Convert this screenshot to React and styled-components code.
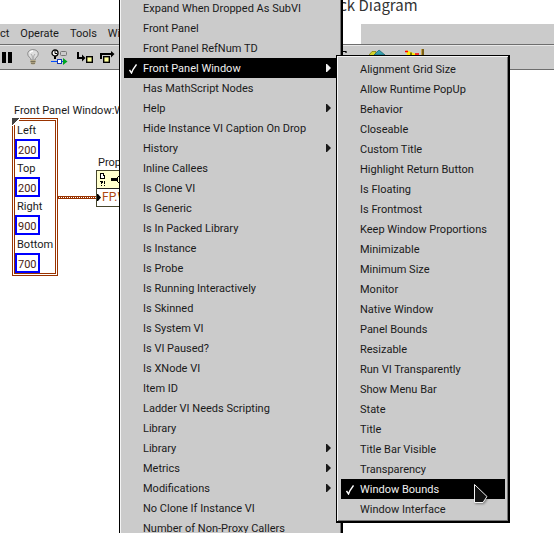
import React from "react";
import styled, { createGlobalStyle, css } from "styled-components";

const Global = createGlobalStyle`
  * { box-sizing: border-box; }
  html, body { margin: 0; background: #fff; }
  body, button, input {
    font-family: Roboto, "Noto Sans CJK SC", sans-serif;
    font-size: 11px;
    line-height: 20px;
    color: #1a1a1a;
  }
  svg { display: block; }
`;

const Screen = styled.div`
  position: relative;
  display: flex;
  flex-direction: column;
  height: 100vh;
  overflow: hidden;
  background: #fff;
`;

const TitleBar = styled.header`
  flex: none;
  height: 24px;
  padding-left: 316px;
`;

const Title = styled.h1`
  margin: -3px 0 0;
  font-family: "Noto Sans CJK SC", sans-serif;
  font-size: 15px;
  font-weight: 400;
  line-height: 16px;
  color: #333;
  white-space: nowrap;
`;

const MenuBar = styled.nav`
  flex: none;
  display: flex;
  height: 20px;
`;

const MenuBarItems = styled.div`
  display: flex;
  flex: none;
  gap: 11px;
  width: 341px;
  background: #cbcbcb;
`;

const MenuBarButton = styled.button`
  border: 0;
  padding: 0;
  background: none;
  white-space: nowrap;
`;

const MenuBarRest = styled.div`
  flex: 1;
  margin-left: 20px;
  background: #cbcbcb;
`;

const Toolbar = styled.div`
  flex: none;
  display: flex;
  align-items: center;
  height: 26px;
  border-top: 1px solid #6e6e6e;
  border-bottom: 1px solid #6e6e6e;
  box-shadow: inset 0 1px #e8e8e8;
  background: #cbcbcb;
`;

const ToolButton = styled.button`
  flex: none;
  display: flex;
  border: 0;
  padding: 0;
  margin-left: ${(p) => p.$gap}px;
  background: none;
`;

const Canvas = styled.main`
  position: relative;
  flex: 1;
`;

const Node = styled.div`
  position: absolute;
  left: ${(p) => p.$x}px;
  top: ${(p) => p.$y}px;
`;

const NodeLabel = styled.div`
  line-height: 16px;
  white-space: nowrap;
`;

const Cluster = styled.div`
  width: 46px;
  border: 3px double #993300;
  background: #fff;
`;

const Field = styled.label`
  display: block;
  line-height: 16px;
  white-space: nowrap;
`;

const FieldName = styled.span`
  display: block;
  padding: 2px 0 0 2px;
`;

const FieldValue = styled.input`
  display: block;
  width: 25px;
  height: 20px;
  border: 2px solid #0000ff;
  padding: 2px 0 0 1px;
  line-height: 14px;
  background: #fff;
  color: #4a2213;
`;

const PropertyNode = styled.div`
  width: 70px;
  border: 1px solid #45452c;
  background: #fff;
`;

const PropertyHead = styled.div`
  display: flex;
  height: 18px;
  border-bottom: 1px solid #222;
  background: #ffffcc;
`;

const PropertyRow = styled.div`
  display: flex;
  align-items: center;
  gap: 1px;
  height: 17px;
  font-size: 12px;
  line-height: 17px;
  color: #b04a12;
`;

const Menu = styled.div`
  position: absolute;
  left: ${(p) => p.$x}px;
  top: ${(p) => p.$y}px;
  width: ${(p) => p.$width}px;
  border: solid #000;
  border-width: 1px 2px 2px 1px;
  padding: 3px 3px 2px 4px;
  background: #cbcbcb;
  box-shadow: inset 1px 1px #f4f4f4, inset -1px -1px #777;
`;

const Item = styled.button`
  display: flex;
  align-items: center;
  width: 100%;
  height: 20px;
  border: 0;
  padding: 0 7px 0 5px;
  background: transparent;
  text-align: left;
  white-space: nowrap;
  ${(p) =>
    p.$active &&
    css`
      background: #000;
      color: #f0f0f0;
    `}
`;

const CheckSlot = styled.span`
  flex: none;
  display: flex;
  width: 14px;
  padding-top: 2px;
`;

const ItemText = styled.span`
  flex: 1;
  padding-top: 2px;
  line-height: 18px;
`;

const Pointer = styled.svg`
  position: absolute;
  left: 473px;
  top: 483px;
  filter: drop-shadow(1px 1px 1px #0006);
`;

const Check = () => (
  <svg width="8" height="10" viewBox="0 0 8 10" fill="none" stroke="#fff" strokeWidth="1.4">
    <path d="M.5 6L2.5 9L4 5.5L7.5 .5" />
  </svg>
);

const Arrow = () => (
  <svg width="5" height="8" viewBox="0 0 5 8" fill="currentColor">
    <path d="M0 0H1L5 4L1 8H0Z" />
  </svg>
);

const PauseIcon = () => (
  <svg width="10" height="11" shapeRendering="crispEdges">
    <path d="M0 0H4V11H0ZM6 0H10V11H6Z" fill="#000" />
  </svg>
);

const BulbIcon = () => (
  <svg width="12" height="16" viewBox="0 0 12 16">
    <path d="M4 11C4 8.5 .7 8 .7 4.8C.7 2.3 3 .6 6 .6S11.3 2.3 11.3 4.8C11.3 8 8 8.5 8 11Z" fill="#dedede" stroke="#8a8a8a" />
    <path d="M3 3.6Q4 2 6 2" fill="none" stroke="#fff" strokeWidth="1.5" />
    <path d="M4 5L5.3 7V11M8 5L6.7 7V11" fill="none" stroke="#aaa" />
    <path d="M3.5 11H8.5V14L7.2 15.5H4.8L3.5 14Z" fill="#b8ab86" />
    <path d="M3.5 12.5H8.5M4 14.3H8" stroke="#77705a" />
  </svg>
);

const ProbeIcon = () => (
  <svg width="17" height="16" viewBox="0 0 17 16">
    <circle cx="4" cy="4" r="3" fill="#fff" stroke="#000" strokeWidth="1.3" />
    <path d="M4 2V4.5H6" fill="none" stroke="#000" />
    <path d="M4 7V10" stroke="#000" strokeWidth="2" />
    <rect x="9.5" y="2.5" width="6" height="4" rx="1" fill="#ccc" stroke="#777" />
    <path d="M0 12.5H6M10 12.5H12" stroke="#004cff" />
    <rect x="6.5" y="10.5" width="4" height="4" fill="#fff" stroke="#1437b0" />
    <path d="M12 9L16.5 12.5L12 16Z" fill="#00a520" />
  </svg>
);

const StepIntoIcon = () => (
  <svg width="16" height="11" viewBox="0 0 16 11">
    <path d="M1 0V6H6" fill="none" stroke="#000" strokeWidth="2" />
    <path d="M5 2.5L8.5 6L5 9.5Z" />
    <rect x="9.7" y="4.7" width="5.6" height="5.6" fill="#ffff99" stroke="#000" strokeWidth="1.4" />
  </svg>
);

const StepOverIcon = () => (
  <svg width="15" height="12" viewBox="0 0 15 12">
    <path d="M1 8V3H11" fill="none" stroke="#000" strokeWidth="2" />
    <path d="M11 0L14.5 3L11 6.5Z" />
    <rect x="3.7" y="5.7" width="5.6" height="5.6" fill="#ffff99" stroke="#000" strokeWidth="1.4" />
  </svg>
);

const StepOutIcon = () => (
  <svg width="8" height="12" viewBox="0 0 8 12">
    <path d="M0 .5H4V2" fill="none" stroke="#000" strokeWidth="1.2" />
  </svg>
);

const CleanUpIcon = () => (
  <svg width="17" height="16" viewBox="0 0 17 16">
    <path d="M0 6L3 2.5H7L6 7H0Z" fill="#d4d42a" stroke="#777700" strokeWidth=".7" />
    <path d="M5 6L10 1L16 6Z" fill="#35a0b0" stroke="#17606a" strokeWidth=".7" />
  </svg>
);

const WarnIcon = () => (
  <svg width="20" height="16" viewBox="0 0 20 16">
    <path d="M1 1L13 6H2Z" fill="#ffee00" />
    <path d="M0 2.5H3M10 5H14" stroke="#f00" strokeWidth="1.5" />
    <path d="M6 3.5V6" stroke="#000" />
    <path d="M16 0H19V6H16Z" fill="#7a6018" />
    <path d="M16.5 0V6" stroke="#c9a54a" />
  </svg>
);

const Wire = () => (
  <svg width="38" height="3" viewBox="0 0 38 3" shapeRendering="crispEdges">
    <path d="M0 .5H38M0 2.5H38" stroke="#993300" />
    <path d="M0 1.5H38" stroke="#993300" strokeDasharray="1 1" />
  </svg>
);

const Corner = () => (
  <svg width="8" height="8" viewBox="0 0 8 8" shapeRendering="crispEdges">
    <path d="M0 0H8V1H7V3H5V5H3V7H1V8H0Z" fill="#fff" />
    <path d="M0 0H7V1H6V2H5V3H4V4H3V5H2V6H1V7H0Z" fill="#444" />
  </svg>
);

const PropertyIcon = () => (
  <svg width="24" height="17" viewBox="0 0 24 17" shapeRendering="crispEdges">
    <path d="M3.5 2.5H6.5V4.5H7.5V7.5H3.5Z" fill="#fff" stroke="#000" />
    <path d="M3 10H6V12H5V13H4V11H3ZM4 14H5V15H4ZM7 10H8V13H7ZM7 14H8V15H7Z" />
    <path d="M14 7H20V10H14Z" />
    <path d="M23 5.5H21.5L20.5 6.5V10.5L21.5 11.5H23" fill="none" stroke="#000" />
  </svg>
);

const PortIcon = () => (
  <svg width="4" height="7" viewBox="0 0 4 7">
    <path d="M0 0H1L4 3.5L1 7H0Z" />
  </svg>
);

const BOUNDS = [
  ["Left", 200],
  ["Top", 200],
  ["Right", 900],
  ["Bottom", 700],
];

const VI_PROPERTIES = [
  { text: "Expand When Dropped As SubVI" },
  { text: "Front Panel" },
  { text: "Front Panel RefNum TD" },
  { text: "Front Panel Window", sub: true, active: true },
  { text: "Has MathScript Nodes" },
  { text: "Help", sub: true },
  { text: "Hide Instance VI Caption On Drop" },
  { text: "History", sub: true },
  { text: "Inline Callees" },
  { text: "Is Clone VI" },
  { text: "Is Generic" },
  { text: "Is In Packed Library" },
  { text: "Is Instance" },
  { text: "Is Probe" },
  { text: "Is Running Interactively" },
  { text: "Is Skinned" },
  { text: "Is System VI" },
  { text: "Is VI Paused?" },
  { text: "Is XNode VI" },
  { text: "Item ID" },
  { text: "Ladder VI Needs Scripting" },
  { text: "Library" },
  { text: "Library", sub: true },
  { text: "Metrics", sub: true },
  { text: "Modifications", sub: true },
  { text: "No Clone If Instance VI" },
  { text: "Number of Non-Proxy Callers" },
];

const WINDOW_PROPERTIES = [
  "Alignment Grid Size",
  "Allow Runtime PopUp",
  "Behavior",
  "Closeable",
  "Custom Title",
  "Highlight Return Button",
  "Is Floating",
  "Is Frontmost",
  "Keep Window Proportions",
  "Minimizable",
  "Minimum Size",
  "Monitor",
  "Native Window",
  "Panel Bounds",
  "Resizable",
  "Run VI Transparently",
  "Show Menu Bar",
  "State",
  "Title",
  "Title Bar Visible",
  "Transparency",
  "Window Bounds",
  "Window Interface",
].map((text) => ({ text, active: text === "Window Bounds" }));

const TOOLS = [
  ["Pause", 2, PauseIcon],
  ["Highlight execution", 15, BulbIcon],
  ["Retain wire values", 12, ProbeIcon],
  ["Step into", 9, StepIntoIcon],
  ["Step over", 7, StepOverIcon],
  ["Step out", 227, StepOutIcon],
  ["Clean up diagram", 19, CleanUpIcon],
  ["Warnings", 19, WarnIcon],
];

function PopupMenu({ label, items, x, y, width }) {
  return (
    <Menu role="menu" aria-label={label} $x={x} $y={y} $width={width}>
      {items.map((item, i) => (
        <Item key={i} role="menuitem" aria-haspopup={item.sub ? "menu" : undefined} $active={item.active}>
          <CheckSlot>{item.active && <Check />}</CheckSlot>
          <ItemText>{item.text}</ItemText>
          {item.sub && <Arrow />}
        </Item>
      ))}
    </Menu>
  );
}

export default function App() {
  return (
    <Screen>
      <Global />
      <TitleBar>
        <Title>Block Diagram</Title>
      </TitleBar>
      <MenuBar>
        <MenuBarItems>
          {["ct", "Operate", "Tools", "Wi"].map((name) => (
            <MenuBarButton key={name}>{name}</MenuBarButton>
          ))}
        </MenuBarItems>
        <MenuBarRest />
      </MenuBar>
      <Toolbar role="toolbar">
        {TOOLS.map(([name, gap, Icon]) => (
          <ToolButton key={name} aria-label={name} $gap={gap}>
            <Icon />
          </ToolButton>
        ))}
      </Toolbar>
      <Canvas>
        <Node $x={14} $y={33}>
          <NodeLabel>Front Panel Window:W</NodeLabel>
        </Node>
        <Node $x={12} $y={48}>
          <Cluster>
            {BOUNDS.map(([name, value]) => (
              <Field key={name}>
                <FieldName>{name}</FieldName>
                <FieldValue defaultValue={value} />
              </Field>
            ))}
          </Cluster>
        </Node>
        <Node $x={12} $y={48}>
          <Corner />
        </Node>
        <Node $x={58} $y={126}>
          <Wire />
        </Node>
        <Node $x={98} $y={85}>
          <NodeLabel>Prop</NodeLabel>
        </Node>
        <Node $x={96} $y={100}>
          <PropertyNode>
            <PropertyHead>
              <PropertyIcon />
            </PropertyHead>
            <PropertyRow>
              <PortIcon />
              FP.W
            </PropertyRow>
          </PropertyNode>
        </Node>
      </Canvas>
      <PopupMenu label="VI properties" items={VI_PROPERTIES} x={119} y={-6} width={224} />
      <PopupMenu label="Front panel window properties" items={WINDOW_PROPERTIES} x={336} y={55} width={174} />
      <Pointer width="16" height="22" viewBox="0 0 16 22">
        <path d="M1.5 1.5V19.5H10L14 13.5Z" fill="#111" stroke="#f4f4f4" strokeLinejoin="round" />
      </Pointer>
    </Screen>
  );
}
